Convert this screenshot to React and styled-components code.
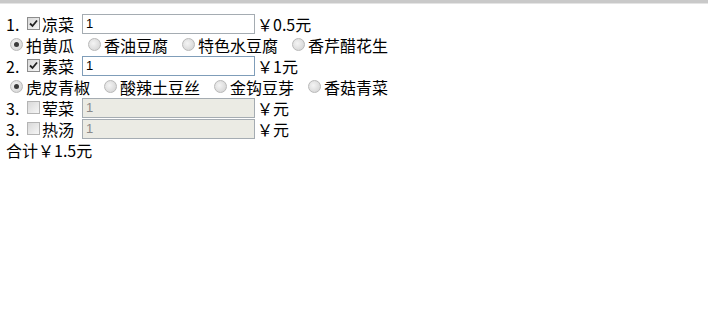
import React from "react";
import styled, { createGlobalStyle } from "styled-components";

const Global = createGlobalStyle`
  html, body { margin: 0; padding: 0; background: #fff; }
  body {
    font-family: "Noto Sans CJK SC", "Noto Sans", sans-serif;
    font-size: 16px;
    color: #000;
  }
`;

const TopBar = styled.div`
  height: 3px;
  background: #c9c9c9;
  border-bottom: 1px solid #e4e4e4;
`;

const Page = styled.div`
  padding: 9px 0 0 6px;
  display: flex;
  flex-direction: column;
`;

const Row = styled.div`
  display: flex;
  align-items: center;
  height: 21px;
  line-height: 18px;
  white-space: nowrap;
`;

const Num = styled.span`
  width: 16px;
`;

const Box = styled.span`
  box-sizing: border-box;
  width: 13px;
  height: 13px;
  margin-left: 5px;
  border: 1px solid ${(p) => (p.$dim ? "#b4b4b4" : "#8c8c8c")};
  background: linear-gradient(135deg, #d8d8d8, #f6f6f6);
  display: inline-flex;
  align-items: center;
  justify-content: center;
`;

const Label = styled.span`
  margin-left: 2px;
  width: 32px;
`;

const Field = styled.input`
  box-sizing: border-box;
  width: 173px;
  height: 20px;
  margin: 0 0 0 8px;
  padding: 0 3px;
  font: 13px "Liberation Sans", sans-serif;
  color: #000;
  border: 1px solid ${(p) => (p.$focus ? "#7f9db9" : "#a5acb2")};
  background: ${(p) => (p.disabled ? "#ebebe4" : "#fff")};
  outline: none;
  &:disabled { color: #8a8a8a; }
`;

const Price = styled.span`
  margin-left: 2px;
`;

const Options = styled(Row)`
  padding-left: 4px;
  gap: 14px;
`;

const Option = styled.span`
  display: inline-flex;
  align-items: center;
  gap: 3px;
`;

const Dot = styled.span`
  box-sizing: border-box;
  width: 13px;
  height: 13px;
  border-radius: 50%;
  border: 1px solid #b9b9b9;
  background: radial-gradient(circle at 40% 40%, #f4f4f4, #cfcfcf);
  display: inline-flex;
  align-items: center;
  justify-content: center;
  &::after {
    content: "";
    width: 5px;
    height: 5px;
    border-radius: 50%;
    background: ${(p) => (p.$on ? "#3a3a3a" : "transparent")};
  }
`;

const Check = () => (
  <svg width="9" height="9" viewBox="0 0 9 9">
    <path d="M1 4.5 L3.5 7 L8 1.5" fill="none" stroke="#222" strokeWidth="1.8" />
  </svg>
);

const Dish = ({ n, name, checked, value, price, disabled, focus }) => (
  <Row>
    <Num>{n}.</Num>
    <Box $dim={!checked}>{checked && <Check />}</Box>
    <Label>{name}</Label>
    <Field defaultValue={value} disabled={disabled} $focus={focus} readOnly />
    <Price>￥{price}元</Price>
  </Row>
);

const Choices = ({ items, selected }) => (
  <Options>
    {items.map((t, i) => (
      <Option key={t}>
        <Dot $on={i === selected} />
        {t}
      </Option>
    ))}
  </Options>
);

export default function App() {
  return (
    <>
      <Global />
      <TopBar />
      <Page>
        <Dish n={1} name="凉菜" checked value="1" price="0.5" />
        <Choices items={["拍黄瓜", "香油豆腐", "特色水豆腐", "香芹醋花生"]} selected={0} />
        <Dish n={2} name="素菜" checked value="1" price="1" focus />
        <Choices items={["虎皮青椒", "酸辣土豆丝", "金钩豆芽", "香菇青菜"]} selected={0} />
        <Dish n={3} name="荤菜" value="1" price="" disabled />
        <Dish n={3} name="热汤" value="1" price="" disabled />
        <Row>合计￥1.5元</Row>
      </Page>
    </>
  );
}
